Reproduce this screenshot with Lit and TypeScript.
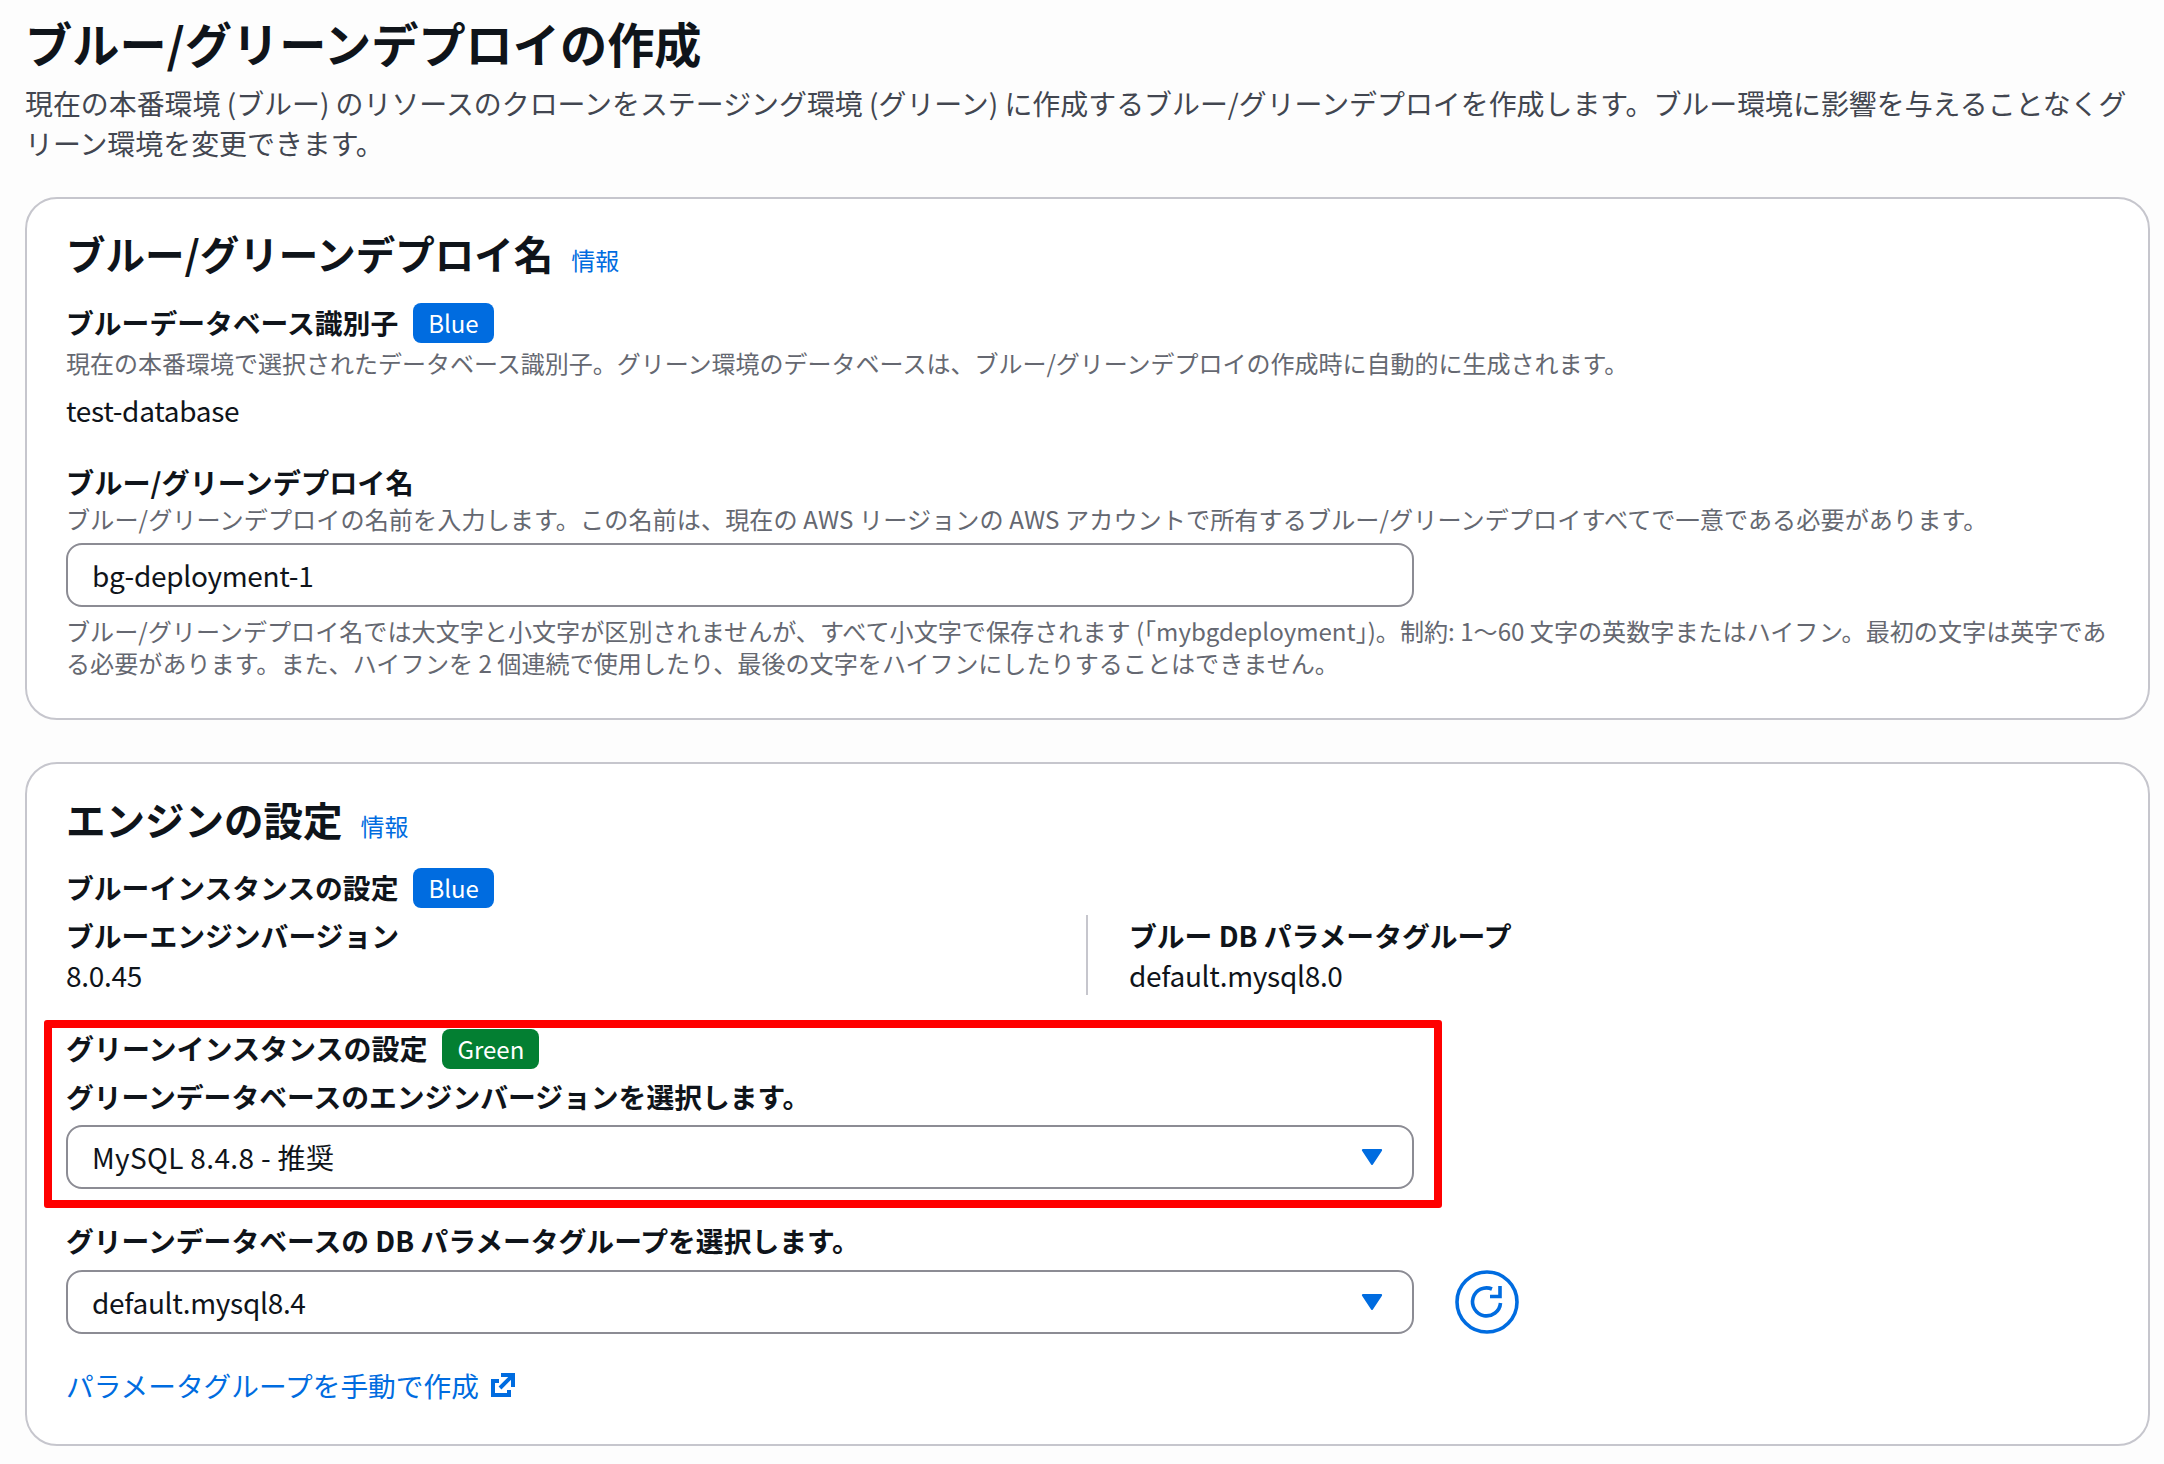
import { LitElement, html, css } from "lit";
import { customElement } from "lit/decorators.js";

const arrow = html`<svg class="arrow" viewBox="0 0 20 15" aria-hidden="true"><path d="M1.5 1h17L10 14z" fill="#006ce0" stroke="#006ce0" stroke-width="2" stroke-linejoin="round"/></svg>`;

@customElement("app-root")
export class AppRoot extends LitElement {
  static styles = css`
    :host {
      display: block;
      min-height: 100vh;
      box-sizing: border-box;
      padding: 15px 14px 0 25px;
      background: #fdfdfd;
      color: #0f141a;
      font-family: "Noto Sans CJK JP", sans-serif;
      font-size: 28px;
      line-height: 40px;
    }
    h1 { margin: 0; font-size: 47.2px; line-height: 56px; font-weight: 700; }
    .sub { margin: 12px 0 0; color: #424650; font-size: 27.93px; line-height: 40px; }
    .card {
      background: #fff;
      border: 2px solid #c6c6cd;
      border-radius: 32px;
      padding: 29px 39px 39px;
      margin-top: 34px;
      position: relative;
    }
    .card.second { margin-top: 42px; padding-top: 30px; }
    h2 { margin: 0; font-size: 39.5px; line-height: 50px; height: 50px; font-weight: 700; display: flex; align-items: baseline; gap: 18px; }
    .info { font-size: 24px; line-height: 30px; font-weight: 400; color: #006ce0; }
    .row { display: flex; align-items: center; gap: 15px; height: 40px; }
    .row .label { line-height: 38px; height: 40px; }
    .label { font-size: 27.8px; line-height: 40px; font-weight: 700; }
    .label.slash { font-size: 28.2px; }
    .label.green-label { font-size: 28px; }
    .badge {
      height: 40px; line-height: 40px; padding: 0 15px; border-radius: 8px;
      background: #006ce0; color: #fff; font-size: 24px; font-weight: 400;
    }
    .badge.green { background: #037f32; }
    .desc { color: #656871; font-size: 24px; line-height: 32px; }
    .desc.wide { font-size: 24.1px; }
    .desc.name { font-size: 24.1px; letter-spacing: 0.1px; }
    .value { letter-spacing: -0.3px; }
    .field {
      box-sizing: border-box; width: 1348px; height: 64px;
      border: 2px solid #8c8c94; border-radius: 16px;
      padding: 0 24px; display: flex; align-items: center; justify-content: space-between;
      background: #fff; font-size: 28px;
    }
    .spaced { letter-spacing: 0.35px; }
    .arrow { width: 22px; height: 16px; margin-right: 5px; flex: none; }
    .field-row { display: flex; align-items: center; gap: 41px; }
    .refresh { width: 64px; height: 64px; flex: none; display: block; }
    .cols { display: grid; grid-template-columns: 1020px 1fr; margin-top: 7px; }
    .cols > div + div { border-left: 2px solid #c6c6cd; padding-left: 41px; }
    .link { color: #006ce0; display: inline-flex; align-items: center; gap: 12px; font-size: 27.7px; }
    .ext { width: 24px; height: 24px; }
    .highlight {
      position: absolute; left: 17px; top: 256px; width: 1398px; height: 188px;
      box-sizing: border-box; border: 8px solid #ff0000; border-radius: 3px; pointer-events: none;
    }
    .mt4 { margin-top: 4px; } .mt11 { margin-top: 11px; } .mt31 { margin-top: 31px; }
    .mt1 { margin-top: 1px; } .mt8 { margin-top: 8px; } .mt25 { margin-top: 25px; }
    .mt24 { margin-top: 24px; } .mt32 { margin-top: 32px; } .mt34 { margin-top: 34px; }
    .mt7 { margin-top: 7px; } .mt9 { margin-top: 9px; } .mt10 { margin-top: 10px; }
  `;

  render() {
    return html`
      <h1>ブルー/グリーンデプロイの作成</h1>
      <p class="sub">現在の本番環境 (ブルー) のリソースのクローンをステージング環境 (グリーン) に作成するブルー/グリーンデプロイを作成します。ブルー環境に影響を与えることなくグリーン環境を変更できます。</p>

      <section class="card">
        <h2>ブルー/グリーンデプロイ名 <span class="info">情報</span></h2>
        <div class="row mt25"><span class="label">ブルーデータベース識別子</span><span class="badge">Blue</span></div>
        <div class="desc mt4">現在の本番環境で選択されたデータベース識別子。グリーン環境のデータベースは、ブルー/グリーンデプロイの作成時に自動的に生成されます。</div>
        <div class="mt11 value">test-database</div>
        <div class="label slash mt32">ブルー/グリーンデプロイ名</div>
        <div class="desc name mt1">ブルー/グリーンデプロイの名前を入力します。この名前は、現在の AWS リージョンの AWS アカウントで所有するブルー/グリーンデプロイすべてで一意である必要があります。</div>
        <div class="field mt8 value">bg-deployment-1</div>
        <div class="desc wide mt8">ブルー/グリーンデプロイ名では大文字と小文字が区別されませんが、すべて小文字で保存されます (「mybgdeployment」)。制約: 1〜60 文字の英数字またはハイフン。最初の文字は英字である必要があります。また、ハイフンを 2 個連続で使用したり、最後の文字をハイフンにしたりすることはできません。</div>
      </section>

      <section class="card second">
        <h2>エンジンの設定 <span class="info">情報</span></h2>
        <div class="row mt24"><span class="label">ブルーインスタンスの設定</span><span class="badge">Blue</span></div>
        <div class="cols">
          <div><div class="label">ブルーエンジンバージョン</div><div class="value">8.0.45</div></div>
          <div><div class="label">ブルー DB パラメータグループ</div><div class="value">default.mysql8.0</div></div>
        </div>
        <div class="row mt34"><span class="label green-label">グリーンインスタンスの設定</span><span class="badge green">Green</span></div>
        <div class="label mt7">グリーンデータベースのエンジンバージョンを選択します。</div>
        <div class="field mt9"><span class="spaced">MySQL 8.4.8 - 推奨</span> ${arrow}</div>
        <div class="label mt31">グリーンデータベースの DB パラメータグループを選択します。</div>
        <div class="field-row mt10">
          <div class="field"><span class="value">default.mysql8.4</span> ${arrow}</div>
          <svg class="refresh" viewBox="0 0 64 64" fill="none" stroke="#006ce0" aria-hidden="true">
            <circle cx="32" cy="32" r="30" stroke-width="3.6"/>
            <path d="M45.5 33A14 14 0 1 1 37 19" stroke-width="3.6"/>
            <path d="M45 16v10.5H35" stroke-width="3.6"/>
          </svg>
        </div>
        <div class="mt31"><a class="link">パラメータグループを手動で作成
          <svg class="ext" viewBox="0 0 24 24" fill="none" stroke="#006ce0" stroke-width="4" aria-hidden="true">
            <path d="M8 8H2v14h16v-5"/><path d="M10 2h12v12M22 2 9 15"/>
          </svg></a></div>
        <div class="highlight"></div>
      </section>
    `;
  }
}
